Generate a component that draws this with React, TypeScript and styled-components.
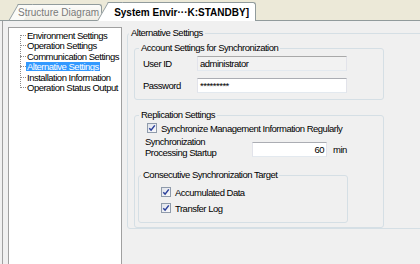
import React from 'react';
import styled, { createGlobalStyle } from 'styled-components';

const GlobalStyle = createGlobalStyle`
  html, body {
    margin: 0;
    padding: 0;
    background: #f0f0f0;
  }
  body {
    font-family: "Liberation Sans", Arial, sans-serif;
    font-size: 9.5px;
    letter-spacing: -0.5px;
    color: #000;
  }
`;

const Window = styled.div`
  width: 420px;
  height: 264px;
  overflow: hidden;
  display: flex;
  flex-direction: column;
  background: #f0f0f0;
`;

const TabStrip = styled.div`
  flex: none;
  height: 20px;
  display: flex;
  align-items: flex-end;
  padding-left: 18px;
  background: #ece9d8;
  border-bottom: 1px solid #919b9c;
`;

const Tab = styled.div<{ $active?: boolean }>`
  position: relative;
  z-index: ${(p) => (p.$active ? 2 : 1)};
  display: flex;
  align-items: center;
  box-sizing: border-box;
  height: ${(p) => (p.$active ? '19px' : '16px')};
  margin-left: ${(p) => (p.$active ? '6px' : '0')};
  margin-bottom: ${(p) => (p.$active ? '-1px' : '0')};
  padding: ${(p) => (p.$active ? '0 6px' : '0 2px 0 0')};
  border-top: 1px solid #919b9c;
  border-right: 1px solid #919b9c;
  border-top-right-radius: 3px;
  background: ${(p) => (p.$active ? '#ffffff' : 'linear-gradient(#fcfcfa, #efede4)')};
  font-size: 10px;
  letter-spacing: 0;
  font-weight: ${(p) => (p.$active ? 'bold' : 'normal')};
  color: ${(p) => (p.$active ? '#000' : '#7a7a7a')};
  white-space: nowrap;

  &::before {
    content: '';
    position: absolute;
    z-index: -1;
    top: -1px;
    bottom: 0;
    left: 0;
    width: 14px;
    border-left: 1px solid #919b9c;
    border-top: 1px solid #919b9c;
    background: ${(p) => (p.$active ? '#ffffff' : '#fbfbf8')};
    transform-origin: top left;
    transform: skewX(-30deg);
  }
`;

const Body = styled.div`
  flex: 1;
  display: flex;
  align-items: flex-start;
  gap: 5px;
  margin-left: 2px;
  padding: 6px 0 0 5px;
  border-left: 1px solid #a0a0a0;
`;

const TreePanel = styled.div`
  flex: none;
  box-sizing: border-box;
  width: 114px;
  height: 260px;
  padding: 2px 0 0 11px;
  background: #fff;
  border: 1px solid #a0a0a0;
`;

const TreeList = styled.ul`
  position: relative;
  margin: 0;
  padding: 0;
  list-style: none;

  &::before {
    content: '';
    position: absolute;
    left: 0;
    top: 5px;
    bottom: 5px;
    border-left: 1px dotted #8c8c8c;
  }
`;

const TreeRow = styled.li`
  display: flex;
  align-items: center;
  height: 10.5px;

  &::before {
    content: '';
    flex: none;
    width: 6px;
    border-top: 1px dotted #8c8c8c;
  }
`;

const TreeLabel = styled.span<{ $selected?: boolean }>`
  padding: 0 1px;
  line-height: 9px;
  white-space: nowrap;
  background: ${(p) => (p.$selected ? '#3399ff' : 'transparent')};
  color: ${(p) => (p.$selected ? '#fff' : '#000')};
`;

const Group = styled.fieldset<{ $width: number }>`
  flex: none;
  box-sizing: border-box;
  width: ${(p) => p.$width}px;
  margin: 0;
  padding: 0;
  border: 1px solid #d5dfe5;
  border-radius: 3px;
  min-inline-size: 0;
`;

const Legend = styled.legend<{ $inset: number }>`
  margin-left: ${(p) => p.$inset}px;
  padding: 0 2px;
  line-height: 12px;
  white-space: nowrap;
`;

const Stack = styled.div<{ $pad: string }>`
  display: flex;
  flex-direction: column;
  align-items: flex-start;
  padding: ${(p) => p.$pad};
`;

const FieldRow = styled.div`
  display: flex;
  align-items: center;
  height: 15px;
  & + & {
    margin-top: 7px;
  }
`;

const FieldLabel = styled.span`
  width: 54px;
  flex: none;
`;

const TextBox = styled.div<{ $width: number; $disabled?: boolean; $right?: boolean }>`
  flex: none;
  box-sizing: border-box;
  width: ${(p) => p.$width}px;
  height: 15px;
  padding: 0 2px;
  display: flex;
  align-items: center;
  justify-content: ${(p) => (p.$right ? 'flex-end' : 'flex-start')};
  background: ${(p) => (p.$disabled ? '#f2f2f2' : '#ffffff')};
  border: 1px solid #e2e3ea;
  border-top-color: ${(p) => (p.$disabled ? '#a9a9a9' : '#abadb3')};
  border-bottom-color: #e3e9ef;
  white-space: nowrap;
`;

const CheckRow = styled.label<{ $indent: number }>`
  display: flex;
  align-items: center;
  gap: 4px;
  height: 12px;
  padding-left: ${(p) => p.$indent}px;
  white-space: nowrap;
  & + & {
    margin-top: 4px;
  }
`;

const Box = styled.span`
  flex: none;
  box-sizing: border-box;
  width: 10px;
  height: 10px;
  display: flex;
  align-items: center;
  justify-content: center;
  border: 1px solid #8f9bab;
  background: linear-gradient(135deg, #dfe3ea, #fbfbfc);
`;

const StartupRow = styled.div`
  display: flex;
  align-items: flex-start;
  margin-top: 3px;
  padding-left: 7px;
`;

const StartupLabel = styled.div`
  flex: none;
  width: 107px;
  line-height: 10.5px;
`;

const InputGroup = styled.div`
  flex: none;
  display: flex;
  align-items: center;
  gap: 6px;
  margin-top: 5px;
`;

const CheckBox: React.FC<{ label: string; indent: number }> = ({ label, indent }) => (
  <CheckRow $indent={indent}>
    <Box>
      <svg width="8" height="8" viewBox="0 0 8 8">
        <path d="M1.3 4.2 L3.1 6.2 L6.8 1.4" fill="none" stroke="#2a3f9a" strokeWidth="1.5" />
      </svg>
    </Box>
    <span>{label}</span>
  </CheckRow>
);

const treeItems = [
  'Environment Settings',
  'Operation Settings',
  'Communication Settings',
  'Alternative Settings',
  'Installation Information',
  'Operation Status Output',
];

const App: React.FC = () => (
  <Window>
    <GlobalStyle />
    <TabStrip>
      <Tab>Structure Diagram</Tab>
      <Tab $active>System Envir···K:STANDBY]</Tab>
    </TabStrip>
    <Body>
      <TreePanel>
        <TreeList>
          {treeItems.map((item) => (
            <TreeRow key={item}>
              <TreeLabel $selected={item === 'Alternative Settings'}>{item}</TreeLabel>
            </TreeRow>
          ))}
        </TreeList>
      </TreePanel>
      <Group $width={300}>
        <Legend $inset={1}>Alternative Settings</Legend>
        <Stack $pad="3px 0 0 6px">
          <Group $width={250}>
            <Legend $inset={4}>Account Settings for Synchronization</Legend>
            <Stack $pad="2px 0 6px 8px">
              <FieldRow>
                <FieldLabel>User ID</FieldLabel>
                <TextBox $width={150} $disabled>administrator</TextBox>
              </FieldRow>
              <FieldRow>
                <FieldLabel>Password</FieldLabel>
                <TextBox $width={150}>*********</TextBox>
              </FieldRow>
            </Stack>
          </Group>
          <Group $width={250} style={{ marginTop: 9 }}>
            <Legend $inset={4}>Replication Settings</Legend>
            <Stack $pad="1px 0 4px 3px">
              <CheckBox indent={9} label="Synchronize Management Information Regularly" />
              <StartupRow>
                <StartupLabel>
                  Synchronization
                  <br />
                  Processing Startup
                </StartupLabel>
                <InputGroup>
                  <TextBox $width={75} $right>
                    60
                  </TextBox>
                  <span>min</span>
                </InputGroup>
              </StartupRow>
              <Group $width={210} style={{ marginTop: 11 }}>
                <Legend $inset={2}>Consecutive Synchronization Target</Legend>
                <Stack $pad="5px 0 8px 22px">
                  <CheckBox indent={0} label="Accumulated Data" />
                  <CheckBox indent={0} label="Transfer Log" />
                </Stack>
              </Group>
            </Stack>
          </Group>
        </Stack>
      </Group>
    </Body>
  </Window>
);

export default App;
